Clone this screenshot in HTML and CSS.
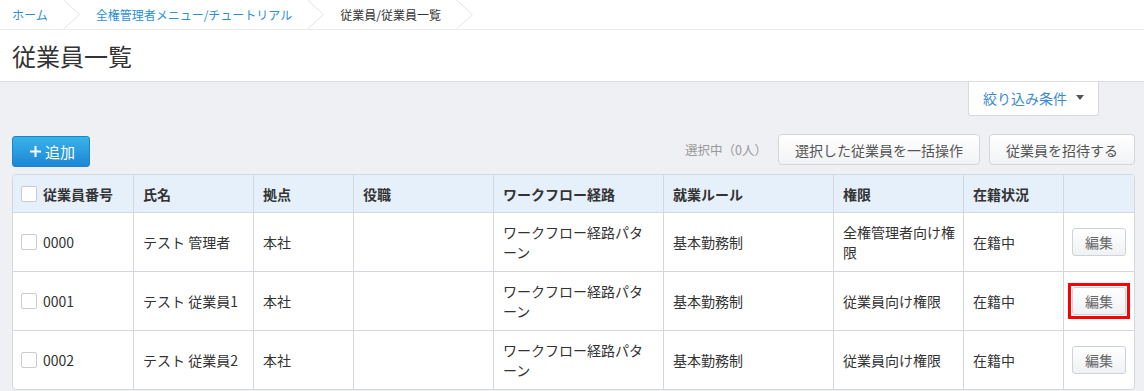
FILE: index.html
```html
<!DOCTYPE html>
<html lang="ja">
<head>
<meta charset="utf-8">
<title>従業員一覧</title>
<link rel="stylesheet" href="styles.css">
</head>
<body>
<nav class="crumbs">
  <a class="crumb link" href="#">ホーム</a>
  <svg class="chev" width="17" height="29" viewBox="0 0 17 29"><polyline points="0.5,0 16.5,14.5 0.5,29" fill="none" stroke="#e3e3e3" stroke-width="1"/></svg>
  <a class="crumb link" href="#">全権管理者メニュー/チュートリアル</a>
  <svg class="chev" width="17" height="29" viewBox="0 0 17 29"><polyline points="0.5,0 16.5,14.5 0.5,29" fill="none" stroke="#e3e3e3" stroke-width="1"/></svg>
  <span class="crumb current">従業員/従業員一覧</span>
  <svg class="chev" width="17" height="29" viewBox="0 0 17 29"><polyline points="0.5,0 16.5,14.5 0.5,29" fill="none" stroke="#e3e3e3" stroke-width="1"/></svg>
</nav>
<header class="page-head">
  <h1 class="title">従業員一覧</h1>
</header>
<main class="content">
  <div class="filter-row">
    <button class="filter-tab">絞り込み条件<span class="caret"></span></button>
  </div>
  <div class="toolbar">
    <button class="btn-add"><svg width="11" height="11" viewBox="0 0 11 11"><path d="M5.5 0v11M0 5.5h11" stroke="#fff" stroke-width="2"/></svg>追加</button>
    <div class="toolbar-right">
      <span class="selected">選択中（0人）</span>
      <button class="btn">選択した従業員を一括操作</button>
      <button class="btn">従業員を招待する</button>
    </div>
  </div>
  <table class="grid">
    <thead>
      <tr>
        <th class="c1"><span class="chk-wrap"><span class="chk"></span>従業員番号</span></th>
        <th class="c2">氏名</th>
        <th class="c3">拠点</th>
        <th class="c4">役職</th>
        <th class="c5">ワークフロー経路</th>
        <th class="c6">就業ルール</th>
        <th class="c7">権限</th>
        <th class="c8">在籍状況</th>
        <th class="c9"></th>
      </tr>
    </thead>
    <tbody>
      <tr>
        <td><span class="chk-wrap"><span class="chk"></span>0000</span></td>
        <td>テスト 管理者</td>
        <td>本社</td>
        <td></td>
        <td>ワークフロー経路パターン</td>
        <td>基本勤務制</td>
        <td>全権管理者向け権限</td>
        <td>在籍中</td>
        <td class="act"><button class="btn-edit">編集</button></td>
      </tr>
      <tr>
        <td><span class="chk-wrap"><span class="chk"></span>0001</span></td>
        <td>テスト 従業員1</td>
        <td>本社</td>
        <td></td>
        <td>ワークフロー経路パターン</td>
        <td>基本勤務制</td>
        <td>従業員向け権限</td>
        <td>在籍中</td>
        <td class="act"><span class="mark"><button class="btn-edit">編集</button></span></td>
      </tr>
      <tr>
        <td><span class="chk-wrap"><span class="chk"></span>0002</span></td>
        <td>テスト 従業員2</td>
        <td>本社</td>
        <td></td>
        <td>ワークフロー経路パターン</td>
        <td>基本勤務制</td>
        <td>従業員向け権限</td>
        <td>在籍中</td>
        <td class="act"><button class="btn-edit">編集</button></td>
      </tr>
    </tbody>
  </table>
</main>
</body>
</html>
```
FILE: styles.css
```css
* { box-sizing: border-box; }
html, body { margin: 0; padding: 0; }
body {
  font-family: "Noto Sans CJK JP", "Noto Sans", sans-serif;
  color: #333;
  background: #eff0f4;
  width: 1144px;
  height: 391px;
  overflow: hidden;
}
button { font-family: inherit; cursor: pointer; }

.crumbs {
  display: flex;
  align-items: center;
  height: 30px;
  padding-left: 12px;
  background: #fff;
  border-bottom: 1px solid #ebebeb;
  font-size: 12px;
}
.crumb { text-decoration: none; line-height: 29px; }
.crumb.link { color: #2b8fd8; }
.crumb.current { color: #333; }
.chev { display: block; margin: 0 16px 0 15px; flex: none; }

.page-head {
  height: 52px;
  background: #fff;
  border-bottom: 1px solid #dcdde0;
  padding-left: 12px;
  display: flex;
  align-items: center;
}
.title {
  margin: 0;
  font-size: 24px;
  font-weight: normal;
  color: #333;
  line-height: 30px;
}

.content { padding: 0 9px 0 12px; }

.filter-row {
  display: flex;
  justify-content: flex-end;
  padding-right: 36px;
}
.filter-tab {
  width: 131px;
  height: 34px;
  background: #fff;
  border: 1px solid #d6d9de;
  border-top: none;
  border-radius: 0 0 3px 3px;
  color: #3a8bd2;
  font-size: 14px;
  padding: 0 0 2px 0;
  display: flex;
  align-items: center;
  justify-content: center;
}
.caret {
  display: inline-block;
  margin-left: 9px;
  width: 0; height: 0;
  border-left: 4px solid transparent;
  border-right: 4px solid transparent;
  border-top: 5px solid #555;
}

.toolbar {
  display: flex;
  justify-content: space-between;
  align-items: flex-start;
  margin-top: 18px;
  height: 40px;
}
.btn-add {
  margin-top: 2px;
  width: 78px;
  height: 31px;
  border: 1px solid #1c84cf;
  border-radius: 3px;
  background: linear-gradient(#38b3e8, #1f86d6);
  color: #fff;
  font-size: 15px;
  display: flex;
  align-items: center;
  padding: 0 0 1px 17px;
  gap: 4px;
}
.toolbar-right {
  display: flex;
  align-items: center;
  gap: 9px;
}
.selected {
  color: #999;
  font-size: 12.5px;
  margin-right: 2px;
}
.btn {
  height: 31px;
  padding: 0 16px;
  border: 1px solid #d3d6db;
  border-radius: 4px;
  background: linear-gradient(#ffffff, #f2f3f5);
  color: #555;
  font-size: 14px;
}

.grid {
  table-layout: fixed;
  width: 1123px;
  border-collapse: separate;
  border-spacing: 0;
  border: 1px solid #d4d7dc;
  border-radius: 4px;
  background: #fff;
  font-size: 14px;
}
.grid th, .grid td {
  text-align: left;
  padding: 0 7px 0 9px;
  vertical-align: middle;
  border-left: 1px solid #d4d7dc;
  line-height: 20px;
}
.grid th:first-child, .grid td:first-child { border-left: none; padding-left: 8px; }
.grid thead th {
  background: #e6f0fb;
  height: 37px;
  font-weight: bold;
  color: #333;
}
.grid thead th:first-child { border-top-left-radius: 3px; }
.grid thead th:last-child { border-top-right-radius: 3px; }
.grid tbody td {
  height: 59px;
  border-top: 1px solid #d4d7dc;
  color: #333;
}
.c1 { width: 120px; }
.c2 { width: 120px; }
.c3 { width: 100px; }
.c4 { width: 140px; }
.c5 { width: 170px; }
.c6 { width: 170px; }
.c7 { width: 130px; }
.c8 { width: 100px; }
.c9 { width: 71px; }

.chk-wrap { display: flex; align-items: center; gap: 6px; }
.chk {
  display: inline-block;
  width: 16px; height: 16px;
  border: 1px solid #c9cbcf;
  border-radius: 2px;
  background: #fff;
  flex: none;
}
.grid td.act { text-align: center; padding: 0; }
.btn-edit {
  width: 54px;
  height: 28px;
  border: 1px solid #cfd2d7;
  border-radius: 3px;
  background: linear-gradient(#ffffff, #eff1f4);
  color: #666;
  font-size: 14px;
  padding: 0;
  vertical-align: middle;
}
.mark {
  display: inline-block;
  padding: 1px;
  border: 3px solid #f00;
  line-height: 0;
  vertical-align: middle;
}
```
